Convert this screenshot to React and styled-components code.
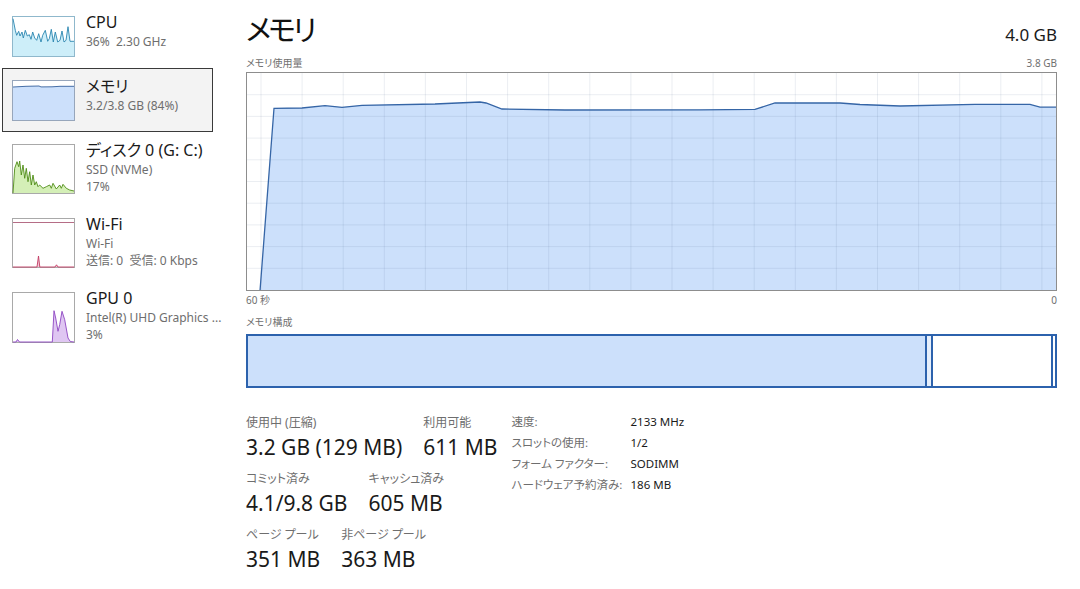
import React from 'react'
import styled, { createGlobalStyle } from 'styled-components'

const GlobalStyle = createGlobalStyle`
  html, body {
    margin: 0;
    padding: 0;
    background: #fff;
  }
  body {
    font-family: "Noto Sans", "Noto Sans CJK JP", sans-serif;
    font-feature-settings: "palt";
    color: #1a1a1a;
  }
`

const Page = styled.div`
  display: flex;
  width: 1080px;
  height: 589px;
  overflow: hidden;
  background: #fff;
`

/* ---------- sidebar ---------- */

const Sidebar = styled.div`
  width: 211px;
  flex-shrink: 0;
  padding: 4px 0 0 2px;
  display: flex;
  flex-direction: column;
`
const Item = styled.div`
  display: flex;
  align-items: flex-start;
  gap: 11px;
  padding: 11px 0 10px 9px;
  border: 1px solid ${p => (p.$active ? '#3a3a3a' : 'transparent')};
  background: ${p => (p.$active ? '#f3f3f3' : 'transparent')};
`
const Thumb = styled.svg`
  display: block;
  flex-shrink: 0;
  width: 63px;
  height: ${p => p.$h}px;
`
const ItemText = styled.div`
  margin-top: -4px;
  white-space: pre;
`
const ItemTitle = styled.div`
  font-size: 16px;
  line-height: 21px;
  color: #1a1a1a;
`
const ItemSub = styled.div`
  font-size: 12px;
  line-height: 17px;
  color: #6e6e6e;
`

/* ---------- main panel ---------- */

const Main = styled.div`
  margin-left: 33px;
  width: 811px;
  display: flex;
  flex-direction: column;
`
const Header = styled.div`
  display: flex;
  justify-content: space-between;
  align-items: baseline;
  padding-top: 8px;
`
const Title = styled.div`
  font-family: "Noto Sans CJK JP", sans-serif;
  font-size: 29px;
  line-height: 40px;
  letter-spacing: -3px;
  color: #111;
`
const Total = styled.div`
  font-size: 17px;
  color: #1a1a1a;
`
const CaptionRow = styled.div`
  display: flex;
  justify-content: space-between;
  font-size: 10px;
  line-height: 16px;
  color: #707070;
  margin-top: ${p => p.$mt || 0}px;
`
const ChartBox = styled.div`
  height: 217px;
  border: 1px solid #8d8d8d;
  margin-top: 1px;
`
const ChartSvg = styled.svg`
  display: block;
  width: 809px;
  height: 217px;
`
const Composition = styled.div`
  display: flex;
  height: 50px;
  margin-top: 4px;
  border: 2px solid #2c62ad;
`
const Segment = styled.div`
  width: ${p => (p.$w ? p.$w + 'px' : 'auto')};
  flex: ${p => (p.$w ? 'none' : 1)};
  background: ${p => p.$fill};
  border-left: ${p => (p.$first ? 'none' : '2px solid #2c62ad')};
`

/* ---------- stats ---------- */

const Stats = styled.div`
  display: flex;
  align-items: flex-start;
  gap: 14px;
  margin-top: 26px;
`
const StatsCol = styled.div`
  display: flex;
  flex-direction: column;
  gap: 8px;
`
const StatRow = styled.div`
  display: flex;
  gap: 21px;
`
const StatLabel = styled.div`
  font-size: 12px;
  line-height: 18px;
  color: #6e6e6e;
`
const StatValue = styled.div`
  font-size: 21px;
  line-height: 30px;
  color: #1a1a1a;
  white-space: nowrap;
`
const InfoTable = styled.div`
  display: grid;
  grid-template-columns: 119px auto;
  align-content: start;
  margin-top: -3px;
  font-size: 11.5px;
  line-height: 21px;
  white-space: nowrap;
`
const InfoLabel = styled.div`
  color: #6e6e6e;
`
const InfoValue = styled.div`
  color: #1a1a1a;
`

/* ---------- thumbnails ---------- */

const pts = a => a.map(p => p.join(',')).join(' ')

const cpuLine = [
  [1, 2.7], [3.3, 14.3], [4.7, 19.3], [6.7, 15.3], [8, 20], [10, 16], [11.3, 22], [13.3, 14.3],
  [15.3, 20], [17.3, 18.7], [19, 23.3], [20.7, 16], [22.7, 22], [24.7, 24.3], [26.7, 17.7],
  [29, 26], [30.7, 19.3], [33.3, 14.3], [35.7, 25.3], [37.3, 22.7], [39.3, 13.3], [41.3, 26],
  [43.3, 16], [45.7, 26], [48, 24.3], [50, 15], [52, 26], [54, 24.3], [56, 10.7], [58, 25.3], [62, 25.3]
]
const memLine = [[1, 7], [14, 6.3], [27, 6], [29, 6.9], [40, 6.8], [48, 6.3], [62, 6.3]]
const diskLine = [
  [1, 49], [2.7, 24.3], [5, 17.7], [6.7, 22.7], [7.7, 17], [9.3, 31], [11, 21], [12.7, 34.3],
  [14.3, 24.3], [16, 37.7], [17.7, 27.7], [19.3, 41], [21, 31], [22.7, 41], [24.3, 37.7],
  [26, 42.7], [27.7, 41], [31, 44.3], [34.3, 42.7], [37.7, 41], [39.3, 44.3], [41, 39.3],
  [44.3, 45], [47.7, 41], [49.3, 44.3], [51, 40.3], [54.3, 44.3], [57.7, 46], [62, 47]
]
const gpuLine = [
  [1, 50], [4, 50], [5.5, 47.5], [7.5, 50], [40.3, 50], [42, 18.7], [43.7, 26], [46, 39.3],
  [47.7, 32.7], [50, 19.3], [52.7, 27.7], [56, 46], [58.3, 49.5], [62, 50]
]
const wifiSpike = [[1, 49], [25, 49], [26.5, 38], [27.8, 49], [43, 49], [44.5, 46.8], [46, 49], [62, 49]]

function Graph({ h, line, fill, stroke, border }) {
  const area = [[line[0][0], h - 1], ...line, [line[line.length - 1][0], h - 1]]
  return (
    <Thumb $h={h} viewBox={`0 0 63 ${h}`} preserveAspectRatio="none">
      <rect x="0.5" y="0.5" width="62" height={h - 1} fill="#fff" stroke={border} />
      <polygon points={pts(area)} fill={fill} />
      <polyline points={pts(line)} fill="none" stroke={stroke} strokeWidth="0.9" />
    </Thumb>
  )
}

function WifiGraph() {
  return (
    <Thumb $h={50} viewBox="0 0 63 50" preserveAspectRatio="none">
      <rect x="0.5" y="0.5" width="62" height="49" fill="#fff" stroke="#a9a9a9" />
      <line x1="1" y1="4.5" x2="62" y2="4.5" stroke="#b56d86" strokeWidth="1" />
      <polygon points={pts(wifiSpike)} fill="#f3c9d6" />
      <polyline points={pts(wifiSpike)} fill="none" stroke="#c23a63" strokeWidth="0.9" />
    </Thumb>
  )
}

/* ---------- main chart ---------- */

const W = 809
const H = 217
const usage = [
  [13, 218], [27, 35.3], [55, 35], [78, 32.7], [95, 34.3], [115, 32.3], [188, 31], [233, 29],
  [239, 30], [255, 36], [318, 37], [453, 36.8], [508, 36.3], [528, 30], [593, 30], [613, 31.5],
  [653, 33], [728, 31.3], [783, 31.3], [793, 34.2], [809, 34.2]
]

function UsageChart() {
  const vLines = []
  for (let x = 14; x < W; x += 41.1) vLines.push(x)
  const hLines = []
  for (let i = 1; i < 10; i++) hLines.push(i * 21.7)
  const area = [...usage, [W, H], [13, H]]
  return (
    <ChartSvg viewBox={`0 0 ${W} ${H}`} preserveAspectRatio="none">
      <polygon points={pts(area)} fill="#cce0fb" />
      {vLines.map(x => (
        <line key={'v' + x} x1={x} y1="0" x2={x} y2={H} stroke="rgba(70,100,140,0.11)" strokeWidth="1" />
      ))}
      {hLines.map(y => (
        <line key={'h' + y} x1="0" y1={y} x2={W} y2={y} stroke="rgba(70,100,140,0.11)" strokeWidth="1" />
      ))}
      <polyline points={pts(usage)} fill="none" stroke="#3565a6" strokeWidth="1.3" />
    </ChartSvg>
  )
}

const sidebarItems = [
  { title: 'CPU', subs: ['36%  2.30 GHz'], h: 41, kind: 'cpu' },
  { title: 'メモリ', subs: ['3.2/3.8 GB (84%)'], h: 41, kind: 'mem', active: true },
  { title: 'ディスク 0 (G: C:)', subs: ['SSD (NVMe)', '17%'], h: 50, kind: 'disk' },
  { title: 'Wi-Fi', subs: ['Wi-Fi', '送信: 0  受信: 0 Kbps'], h: 50, kind: 'wifi' },
  { title: 'GPU 0', subs: ['Intel(R) UHD Graphics ...', '3%'], h: 51, kind: 'gpu' }
]

function ItemGraph({ kind, h }) {
  if (kind === 'cpu') return <Graph h={h} line={cpuLine} fill="#cdeef9" stroke="#2a86b0" border="#8fb8cc" />
  if (kind === 'mem') return <Graph h={h} line={memLine} fill="#cce0fb" stroke="#34609c" border="#97a6bb" />
  if (kind === 'disk') return <Graph h={h} line={diskLine} fill="#d4efb7" stroke="#4f8c16" border="#a9a9a9" />
  if (kind === 'gpu') return <Graph h={h} line={gpuLine} fill="#dfc6f2" stroke="#8d45c2" border="#a9a9a9" />
  return <WifiGraph />
}

const App = () => {
  return (
    <Page>
      <GlobalStyle />
      <Sidebar>
        {sidebarItems.map(it => (
          <Item key={it.title} $active={it.active}>
            <ItemGraph kind={it.kind} h={it.h} />
            <ItemText>
              <ItemTitle>{it.title}</ItemTitle>
              {it.subs.map(s => <ItemSub key={s}>{s}</ItemSub>)}
            </ItemText>
          </Item>
        ))}
      </Sidebar>

      <Main>
        <Header>
          <Title>メモリ</Title>
          <Total>4.0 GB</Total>
        </Header>
        <CaptionRow $mt={7}>
          <span>メモリ使用量</span>
          <span>3.8 GB</span>
        </CaptionRow>
        <ChartBox>
          <UsageChart />
        </ChartBox>
        <CaptionRow $mt={1}>
          <span>60 秒</span>
          <span>0</span>
        </CaptionRow>
        <CaptionRow $mt={6}>
          <span>メモリ構成</span>
        </CaptionRow>
        <Composition>
          <Segment $first $w={677} $fill="#cce0fb" />
          <Segment $w={4} $fill="#e6effb" />
          <Segment $fill="#fff" />
          <Segment $w={2} $fill="#fff" />
        </Composition>

        <Stats>
          <StatsCol>
            <StatRow>
              <div>
                <StatLabel>使用中 (圧縮)</StatLabel>
                <StatValue>3.2 GB (129 MB)</StatValue>
              </div>
              <div>
                <StatLabel>利用可能</StatLabel>
                <StatValue>611 MB</StatValue>
              </div>
            </StatRow>
            <StatRow>
              <div>
                <StatLabel>コミット済み</StatLabel>
                <StatValue>4.1/9.8 GB</StatValue>
              </div>
              <div>
                <StatLabel>キャッシュ済み</StatLabel>
                <StatValue>605 MB</StatValue>
              </div>
            </StatRow>
            <StatRow>
              <div>
                <StatLabel>ページ プール</StatLabel>
                <StatValue>351 MB</StatValue>
              </div>
              <div>
                <StatLabel>非ページ プール</StatLabel>
                <StatValue>363 MB</StatValue>
              </div>
            </StatRow>
          </StatsCol>
          <InfoTable>
            <InfoLabel>速度:</InfoLabel>
            <InfoValue>2133 MHz</InfoValue>
            <InfoLabel>スロットの使用:</InfoLabel>
            <InfoValue>1/2</InfoValue>
            <InfoLabel>フォーム ファクター:</InfoLabel>
            <InfoValue>SODIMM</InfoValue>
            <InfoLabel>ハードウェア予約済み:</InfoLabel>
            <InfoValue>186 MB</InfoValue>
          </InfoTable>
        </Stats>
      </Main>
    </Page>
  )
}

export default App
